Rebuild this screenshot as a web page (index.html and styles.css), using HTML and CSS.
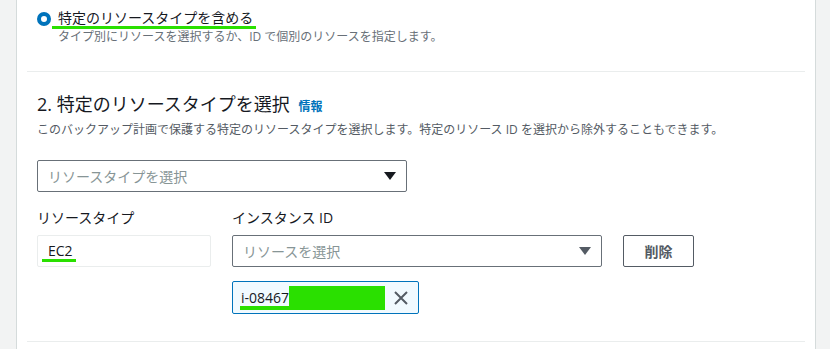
FILE: index.html
```html
<!DOCTYPE html>
<html lang="ja">
<head>
  <meta charset="UTF-8" />
  <title>リソースの割り当て</title>
  <link rel="stylesheet" href="styles.css">
</head>
<body>
  <div class="panel">
    <section class="block top">
      <label class="radio">
        <span class="dot"></span>
        <span class="radio-text">
          <span class="radio-title"><span class="mark">特定のリソースタイプを含める</span></span>
          <span class="radio-desc">タイプ別にリソースを選択するか、ID で個別のリソースを指定します。</span>
        </span>
      </label>
    </section>

    <section class="block">
      <h2>2. 特定のリソースタイプを選択 <a href="#" class="info">情報</a></h2>
      <p class="desc">このバックアップ計画で保護する特定のリソースタイプを選択します。特定のリソース ID を選択から除外することもできます。</p>

      <div class="select wide">
        <span>リソースタイプを選択</span>
        <span class="caret"></span>
      </div>

      <div class="row">
        <div class="field type">
          <div class="label">リソースタイプ</div>
          <div class="readonly"><span class="mark">EC2</span></div>
        </div>
        <div class="field">
          <div class="label">インスタンス ID</div>
          <div class="select">
            <span>リソースを選択</span>
            <span class="caret"></span>
          </div>
        </div>
        <div class="field">
          <div class="label">&nbsp;</div>
          <button class="remove">削除</button>
        </div>
      </div>

      <div class="token">
        <span class="token-id mark">i-08467<span class="redact"></span></span>
        <svg class="close" width="14" height="14" viewBox="0 0 14 14">
          <path d="M1 1 L13 13 M13 1 L1 13" stroke="#545b64" stroke-width="2" fill="none" />
        </svg>
      </div>
    </section>
  </div>
</body>
</html>
```

FILE: styles.css
```css
body {
  margin: 0;
  background-color: #f2f3f3;
  font-family: 'Open Sans', 'Noto Sans CJK JP', sans-serif;
  color: #16191f;
}

.panel {
  margin-left: 16px;
  width: 800px;
  height: 349px;
  background-color: #fff;
  border-left: 1px solid #d5dbdb;
  border-right: 1px solid #d5dbdb;
  padding: 0 10px;
  box-sizing: border-box;
}

.block {
  padding: 0 10px 27px;
  border-bottom: 1px solid #eaeded;
}

.top {
  padding-top: 8px;
  padding-bottom: 0;
  height: 63px;
}

.radio {
  display: flex;
  gap: 7px;
  align-items: flex-start;
}

.dot {
  width: 14px;
  height: 14px;
  margin-top: 4px;
  border: 4px solid #0073bb;
  border-radius: 50%;
  box-sizing: border-box;
  flex-shrink: 0;
}

.radio-text {
  display: flex;
  flex-direction: column;
}

.radio-title {
  font-size: 14px;
  line-height: 20px;
}

.radio-desc {
  font-size: 12px;
  line-height: 16px;
  color: #687078;
  margin-top: 1px;
}

.mark {
  position: relative;
}

.mark::after {
  content: "";
  position: absolute;
  left: -6px;
  right: -3px;
  bottom: -2px;
  height: 3px;
  background-color: #2ae000;
}

h2 {
  margin: 0;
  padding-top: 20px;
  font-size: 18px;
  font-weight: 400;
  line-height: 24px;
}

.info {
  font-size: 12px;
  font-weight: 700;
  color: #0073bb;
  text-decoration: none;
  margin-left: 4px;
}

.desc {
  margin: 3px 0 0;
  font-size: 12px;
  line-height: 16px;
  color: #545b64;
}

.select {
  display: flex;
  align-items: center;
  justify-content: space-between;
  height: 32px;
  width: 370px;
  padding: 0 9px 0 10px;
  border: 1px solid #687078;
  border-radius: 2px;
  box-sizing: border-box;
  font-size: 14px;
  color: #879596;
}

.select.wide {
  margin-top: 22px;
}

.caret {
  width: 0;
  height: 0;
  border-left: 6px solid transparent;
  border-right: 6px solid transparent;
  border-top: 8px solid #16191f;
  margin-right: 1px;
}

.row .caret {
  border-top-color: #545b64;
}

.row {
  display: flex;
  gap: 21px;
  margin-top: 16px;
}

.label {
  font-size: 14px;
  line-height: 20px;
  margin-bottom: 7px;
}

.type {
  width: 174px;
}

.readonly {
  height: 32px;
  border: 1px solid #eaeded;
  box-sizing: border-box;
  padding-left: 10px;
  font-size: 14px;
  line-height: 30px;
  border-radius: 2px;
}

.remove {
  height: 32px;
  width: 71px;
  background-color: #fff;
  border: 1px solid #545b64;
  border-radius: 2px;
  font-family: inherit;
  font-size: 14px;
  font-weight: 700;
  color: #545b64;
}

.token {
  display: flex;
  align-items: center;
  gap: 9px;
  width: 187px;
  height: 33px;
  margin: 14px 0 0 195px;
  padding-left: 8px;
  border: 1px solid #0073bb;
  border-radius: 2px;
  background-color: #f1faff;
  box-sizing: border-box;
  font-size: 14px;
}

.token-id {
  display: flex;
  align-items: center;
}

.token-id.mark::after {
  left: -1px;
  right: 0;
  bottom: -1px;
  height: 4px;
}

.redact {
  display: inline-block;
  width: 96px;
  height: 23px;
  background-color: #2ae000;
}

.close {
  flex-shrink: 0;
}
```
